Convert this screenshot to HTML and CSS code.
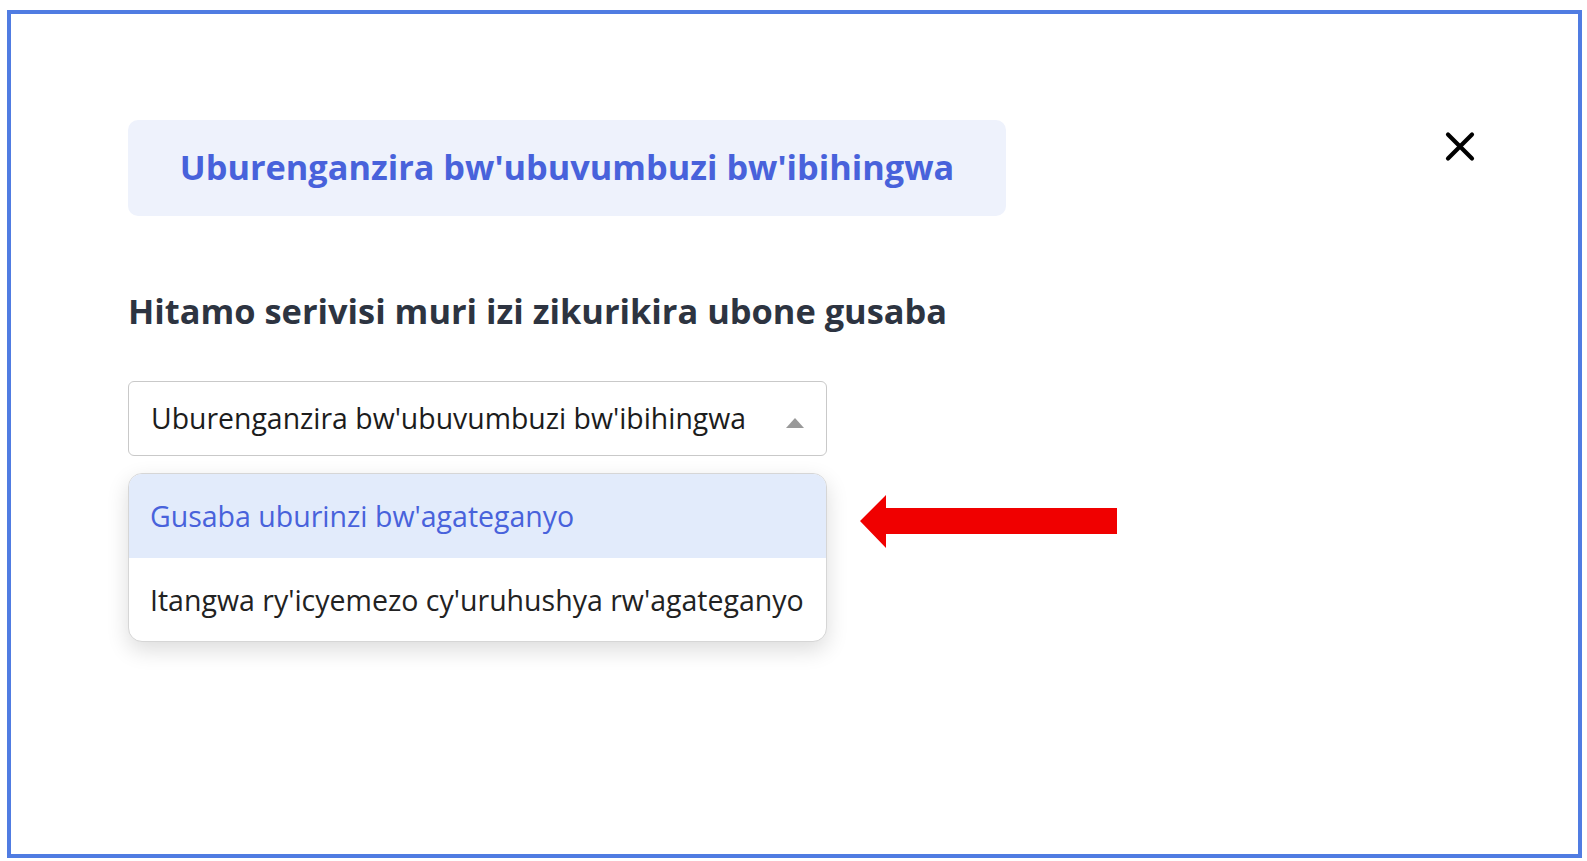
FILE: index.html
```html
<!DOCTYPE html>
<html lang="rw">
<head>
<meta charset="utf-8">
<title>Serivisi</title>
<link rel="stylesheet" href="styles.css">
</head>
<body>
<div class="frame">
  <div class="content">
    <div class="header-row">
      <div class="banner"><h1 class="banner-title">Uburenganzira bw'ubuvumbuzi bw'ibihingwa</h1></div>
      <button class="close" aria-label="Close">
        <svg width="30" height="31" viewBox="0 0 30 31"><path d="M3 3.5 L27 27.5 M27 3.5 L3 27.5" stroke="#000" stroke-width="4.2" stroke-linecap="round" fill="none"/></svg>
      </button>
    </div>
    <h2 class="prompt">Hitamo serivisi muri izi zikurikira ubone gusaba</h2>
    <div class="select">
      <span class="select-value">Uburenganzira bw'ubuvumbuzi bw'ibihingwa</span>
      <span class="caret"></span>
    </div>
    <ul class="menu">
      <li class="menu-item active">Gusaba uburinzi bw'agateganyo</li>
      <li class="menu-item">Itangwa ry'icyemezo cy'uruhushya rw'agateganyo</li>
    </ul>
  </div>
  <svg class="arrow" width="258" height="53" viewBox="0 0 258 53"><polygon points="1,26 27,0 27,13 258,13 258,39 27,39 27,53" fill="#f00000"/></svg>
</div>
</body>
</html>
```
FILE: styles.css
```css
html, body {
  margin: 0;
  padding: 0;
  background: #ffffff;
}
body {
  font-family: "Open Sans", "Lato", sans-serif;
}
.frame {
  position: relative;
  box-sizing: border-box;
  width: 1575px;
  height: 848px;
  margin: 10px 0 0 7px;
  border: 4px solid #507ce2;
  background: #fff;
}
.content {
  padding: 106px 103px 0 117px;
}
.header-row {
  display: flex;
  align-items: flex-start;
}
.banner {
  box-sizing: border-box;
  width: 878px;
  height: 96px;
  padding-top: 26px;
  background: #eef2fc;
  border-radius: 10px;
  text-align: center;
}
.banner-title {
  margin: 0;
  font-size: 34.3px;
  line-height: 1.2;
  font-weight: 700;
  color: #4862db;
}
.close {
  margin: 11px 0 0 auto;
  padding: 0;
  border: 0;
  background: none;
  width: 30px;
  height: 31px;
  display: block;
}
.close svg { display: block; }
.prompt {
  margin: 74px 0 0 0;
  font-size: 34.4px;
  line-height: 1.2;
  font-weight: 700;
  color: #2d3441;
}
.select {
  box-sizing: border-box;
  display: flex;
  align-items: flex-start;
  width: 699px;
  height: 75px;
  margin-top: 50px;
  padding: 19px 22px 0 22px;
  border: 1px solid #c9c9c9;
  border-radius: 6px;
  background: #fff;
}
.select-value {
  font-size: 28.4px;
  line-height: 1.2;
  color: #1c1c1c;
}
.caret {
  margin: 17px 0 0 auto;
  width: 0;
  height: 0;
  border-left: 9.5px solid transparent;
  border-right: 9.5px solid transparent;
  border-bottom: 10px solid #999999;
}
.menu {
  box-sizing: border-box;
  width: 699px;
  margin: 17px 0 0 0;
  padding: 0;
  list-style: none;
  border: 1px solid #d6d6d6;
  border-radius: 14px;
  overflow: hidden;
  background: #fff;
  box-shadow: 0 8px 22px rgba(0, 0, 0, 0.14);
}
.menu-item {
  box-sizing: border-box;
  height: 83px;
  padding: 25px 0 0 21px;
  font-size: 28.5px;
  line-height: 1.2;
  color: #222222;
}
.menu-item.active {
  height: 84px;
  background: #e2ebfb;
  color: #4862db;
}
.arrow {
  position: absolute;
  left: 848px;
  top: 481px;
  display: block;
}
```
